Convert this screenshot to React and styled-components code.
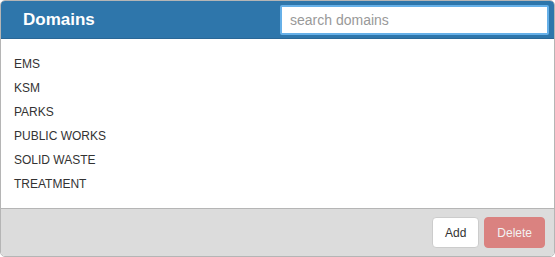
import styled, { createGlobalStyle } from "styled-components";

const GlobalStyle = createGlobalStyle`
  html, body {
    margin: 0;
    padding: 0;
    background: #fff;
  }
  * {
    box-sizing: border-box;
  }
`;

const Panel = styled.div`
  width: 555px;
  height: 257px;
  border: 1px solid #b5b5b5;
  border-radius: 5px;
  overflow: hidden;
  display: flex;
  flex-direction: column;
  font-family: "Liberation Sans", Arial, sans-serif;
`;

const Header = styled.div`
  height: 39px;
  background: #2e76ab;
  border-bottom: 1px solid #2a6796;
  display: flex;
  align-items: center;
  justify-content: space-between;
  padding: 0 5px 0 22px;
`;

const Title = styled.h3`
  margin: 0;
  color: #fff;
  font-size: 17px;
  font-weight: bold;
`;

const Search = styled.input`
  width: 269px;
  height: 30px;
  border: 2px solid #66b0e8;
  border-radius: 2px;
  padding: 0 8px;
  font-family: inherit;
  font-size: 14px;
  color: #555;
  outline: none;

  &::placeholder {
    color: #999;
  }
`;

const List = styled.ul`
  flex: 1;
  list-style: none;
  margin: 0;
  padding: 13px 13px 12px;
`;

const Item = styled.li`
  height: 24px;
  line-height: 24px;
  font-size: 12px;
  color: #333;
`;

const Footer = styled.div`
  height: 49px;
  background: #dcdcdc;
  border-top: 1px solid #b5b5b5;
  display: flex;
  justify-content: flex-end;
  align-items: flex-start;
  gap: 5px;
  padding: 8px 9px 0 0;
`;

const Button = styled.button`
  height: 31px;
  padding: 0 12px;
  border-radius: 4px;
  border: 1px solid ${(p) => (p.$danger ? "#d9534f" : "#ccc")};
  background: ${(p) => (p.$danger ? "#d9534f" : "#fff")};
  color: ${(p) => (p.$danger ? "#fff" : "#333")};
  opacity: ${(p) => (p.disabled ? 0.65 : 1)};
  font-family: inherit;
  font-size: 12px;
  cursor: pointer;
`;

const domains = ["EMS", "KSM", "PARKS", "PUBLIC WORKS", "SOLID WASTE", "TREATMENT"];

const App = () => {
  return (
    <>
      <GlobalStyle />
      <Panel>
        <Header>
          <Title>Domains</Title>
          <Search placeholder="search domains" autoFocus />
        </Header>
        <List>
          {domains.map((d) => (
            <Item key={d}>{d}</Item>
          ))}
        </List>
        <Footer>
          <Button>Add</Button>
          <Button $danger disabled>
            Delete
          </Button>
        </Footer>
      </Panel>
    </>
  );
};

export default App;
